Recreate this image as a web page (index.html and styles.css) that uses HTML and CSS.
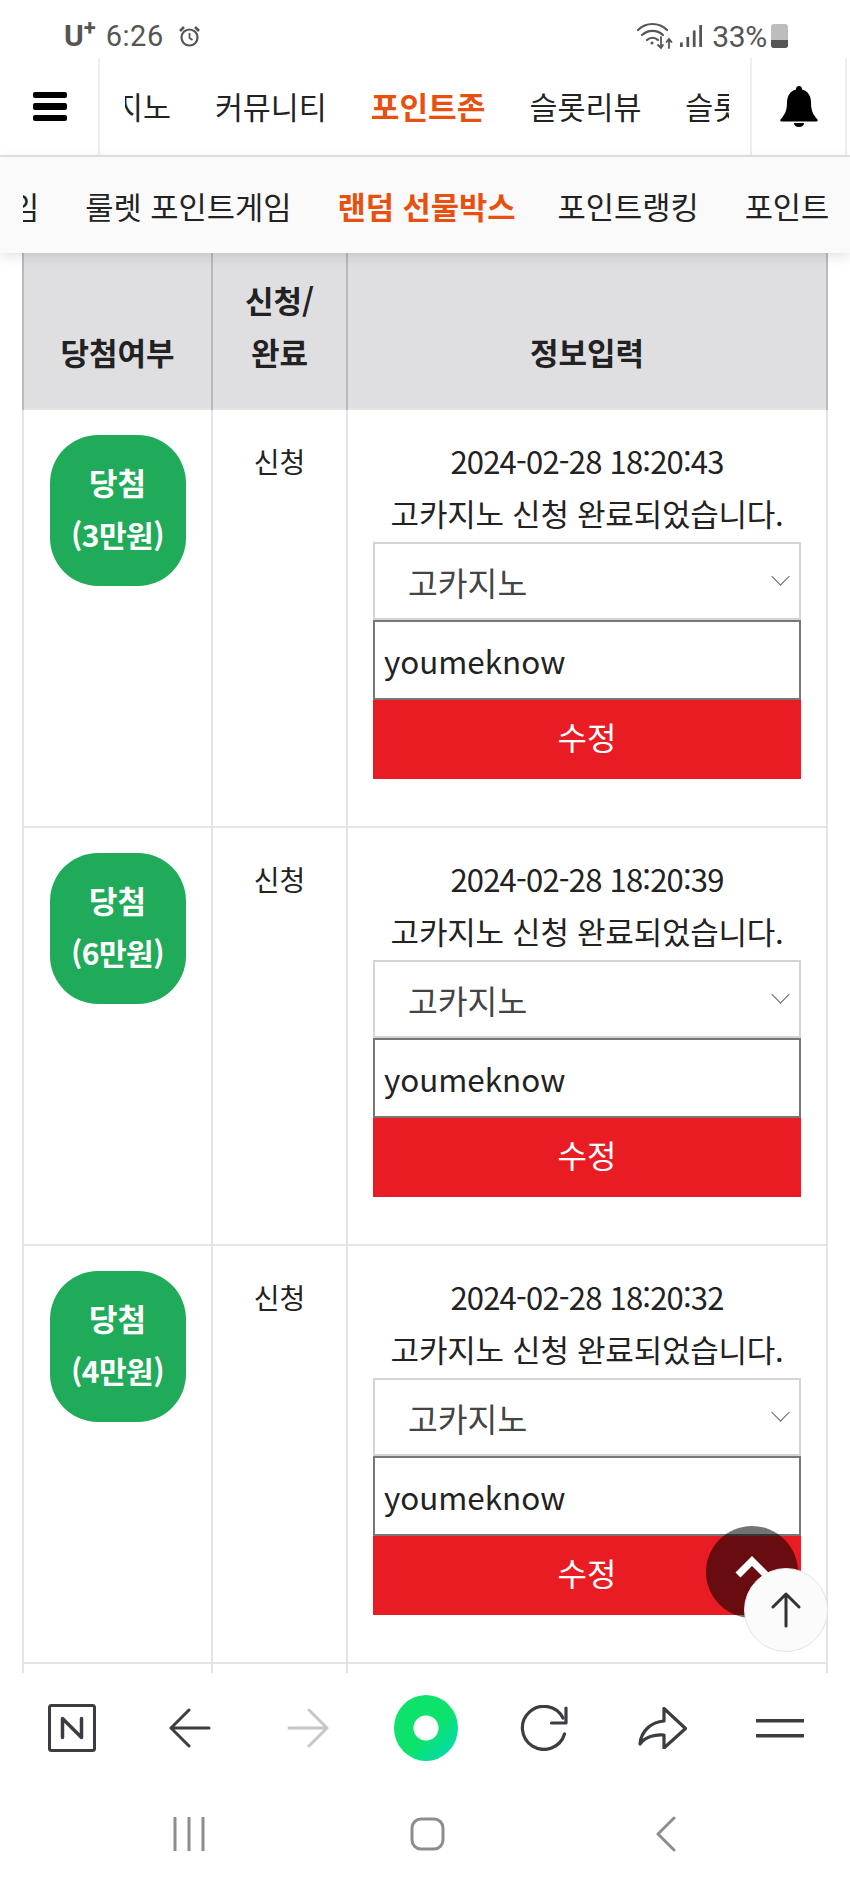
FILE: index.html
```html
<!DOCTYPE html>
<html lang="ko">
<head>
    <meta charset="UTF-8">
    <meta name="viewport" content="width=device-width, initial-scale=1.0">
    <title>랜덤 선물박스</title>
    <link rel="stylesheet" href="styles.css">
</head>
<body>
<div class="screen">
    <div class="status-bar">
        <div class="status-left">
            <span class="carrier">U<sup>+</sup></span>
            <span class="clock">6:26</span>
            <svg class="alarm" width="23" height="23" viewBox="0 0 23 23" fill="none" stroke="#555" stroke-width="2.2"><circle cx="11.5" cy="12.5" r="8"/><path d="M11.5 8v5l3 2" stroke-width="1.8"/><path d="M2 6l4-4M21 6l-4-4" stroke-width="2.6"/></svg>
        </div>
        <div class="status-right">
            <svg width="36" height="28" viewBox="0 0 36 28" fill="none" stroke="#555" stroke-width="2.2" stroke-linecap="round"><path d="M1 8c8-8 21-8 29 0"/><path d="M5 13c6-5.500 15-5.500 21 0"/><path d="M10 18c3-3 8-3 11 0"/><circle cx="15" cy="21" r="1.500" fill="#555" stroke="none"/><path d="M24 15v11M21 23l3 3 2-3M32 26V17M29.500 20l2.500-3 2.500 3" stroke-width="1.800"/></svg>
            <svg width="22" height="26" viewBox="0 0 24 26" fill="#555"><rect x="0" y="20" width="3" height="5"/><rect x="7" y="14" width="3" height="11"/><rect x="14" y="7" width="3" height="18"/><rect x="21" y="1" width="3" height="24"/></svg>
            <span class="battery-text">33%</span>
            <div class="battery"><div class="battery-fill"></div></div>
        </div>
    </div>

    <div class="top-nav">
        <div class="nav-btn menu-btn">
            <span></span><span></span><span></span>
        </div>
        <div class="top-scroll">
            <div class="top-track">
                <a>카지노</a>
                <a>커뮤니티</a>
                <a class="active">포인트존</a>
                <a>슬롯리뷰</a>
                <a>슬롯게임</a>
            </div>
        </div>
        <div class="nav-btn bell-btn">
            <svg width="38" height="41" viewBox="0 0 38 41" fill="#000"><path d="M19 0c2 0 3 1.500 3 3.500 6 1.500 9 6.500 9 13 0 8 2 12 6.500 17 .5 1 0 2-1 2H1.500c-1 0-1.500-1-1-2C5 28.500 7 24.500 7 16.500c0-6.500 3-11.500 9-13C16 1.500 17 0 19 0z"/><path d="M14 37h10c0 2.500-2 4-5 4s-5-1.500-5-4z"/></svg>
        </div>
    </div>

    <div class="sub-nav">
        <div class="sub-scroll">
            <div class="sub-track">
                <a>슬롯 포인트게임</a>
                <a>룰렛 포인트게임</a>
                <a class="active">랜덤 선물박스</a>
                <a>포인트랭킹</a>
                <a>포인트교환</a>
            </div>
        </div>
    </div>

    <div class="content">
        <table class="result-table">
            <colgroup>
                <col class="col-result">
                <col class="col-state">
                <col class="col-info">
            </colgroup>
            <thead>
                <tr>
                    <th>당첨여부</th>
                    <th>신청/<br>완료</th>
                    <th>정보입력</th>
                </tr>
            </thead>
            <tbody>
                <tr>
                    <td><div class="badge">당첨<br><span class="badge-prize">(3만원)</span></div></td>
                    <td class="state-cell">신청</td>
                    <td class="info-cell">
                        <div class="info-date">2024-02-28 18:20:43</div>
                        <div class="info-text">고카지노 신청 완료되었습니다.</div>
                        <div class="select-wrap"><select class="site-select"><option>고카지노</option></select></div>
                        <input class="id-input" type="text" value="youmeknow">
                        <button class="edit-btn">수정</button>
                    </td>
                </tr>
                <tr>
                    <td><div class="badge">당첨<br><span class="badge-prize">(6만원)</span></div></td>
                    <td class="state-cell">신청</td>
                    <td class="info-cell">
                        <div class="info-date">2024-02-28 18:20:39</div>
                        <div class="info-text">고카지노 신청 완료되었습니다.</div>
                        <div class="select-wrap"><select class="site-select"><option>고카지노</option></select></div>
                        <input class="id-input" type="text" value="youmeknow">
                        <button class="edit-btn">수정</button>
                    </td>
                </tr>
                <tr>
                    <td><div class="badge">당첨<br><span class="badge-prize">(4만원)</span></div></td>
                    <td class="state-cell">신청</td>
                    <td class="info-cell">
                        <div class="info-date">2024-02-28 18:20:32</div>
                        <div class="info-text">고카지노 신청 완료되었습니다.</div>
                        <div class="select-wrap"><select class="site-select"><option>고카지노</option></select></div>
                        <input class="id-input" type="text" value="youmeknow">
                        <button class="edit-btn">수정</button>
                    </td>
                </tr>
                <tr>
                    <td></td>
                    <td></td>
                    <td></td>
                </tr>
            </tbody>
        </table>

        <!-- floating buttons over the last row -->
        <div class="float-top">
            <svg width="34" height="24" viewBox="0 0 34 24" fill="none" stroke="#fff" stroke-width="7"><path d="M3 21L17 7l14 14"/></svg>
        </div>
        <div class="float-up">
            <svg width="30" height="36" viewBox="0 0 30 36" fill="none" stroke="#333" stroke-width="3" stroke-linecap="round" stroke-linejoin="round"><path d="M15 34V2M2 15L15 2l13 13"/></svg>
        </div>
    </div>

    <div class="toolbar">
        <div class="tool">
            <svg width="48" height="48" viewBox="0 0 48 48" fill="none" stroke="#3a3d42" stroke-width="3" stroke-linecap="round" stroke-linejoin="round"><rect x="1.500" y="1.500" width="45" height="45" rx="2"/><path d="M14.500 33.500V14.500l19 19V14.500" stroke-width="3.500"/></svg>
        </div>
        <div class="tool">
            <svg width="42" height="40" viewBox="0 0 42 40" fill="none" stroke="#3a3d42" stroke-width="3" stroke-linecap="round" stroke-linejoin="round"><path d="M40 20H2M20 2L2 20l18 18"/></svg>
        </div>
        <div class="tool">
            <svg width="42" height="40" viewBox="0 0 42 40" fill="none" stroke="#c4c6c9" stroke-width="3" stroke-linecap="round" stroke-linejoin="round"><path d="M2 20h38M22 2l18 18-18 18"/></svg>
        </div>
        <div class="tool">
            <div class="green-ring"></div>
        </div>
        <div class="tool">
            <svg width="48" height="46" viewBox="0 0 48 46" fill="none" stroke="#3a3d42" stroke-width="3.200" stroke-linecap="round" stroke-linejoin="round"><path d="M44.500 29A21.500 21.500 0 1 1 43 13"/><path d="M46 3v15H31.500"/></svg>
        </div>
        <div class="tool">
            <svg width="50" height="42" viewBox="0 0 50 42" fill="none" stroke="#3a3d42" stroke-width="3.200" stroke-linecap="round" stroke-linejoin="round"><path d="M27 1.500L48.500 21.500 27 41V28C18 27 8 30 3 37 4 24 14 15 27 14z"/></svg>
        </div>
        <div class="tool">
            <svg width="48" height="20" viewBox="0 0 48 20" fill="#3a3d42"><rect width="48" height="3.500" y="1"/><rect width="48" height="3.500" y="16"/></svg>
        </div>
    </div>

    <div class="system-nav">
        <div class="sys-key">
            <svg width="32" height="34" viewBox="0 0 32 34" fill="none" stroke="#8c8d8f" stroke-width="3"><path d="M2 0v34M16 0v34M30 0v34"/></svg>
        </div>
        <div class="sys-key">
            <svg width="35" height="34" viewBox="0 0 35 34" fill="none" stroke="#8c8d8f" stroke-width="3"><rect x="2" y="2" width="31" height="30" rx="9"/></svg>
        </div>
        <div class="sys-key">
            <svg width="21" height="36" viewBox="0 0 21 36" fill="none" stroke="#8c8d8f" stroke-width="3" stroke-linecap="round" stroke-linejoin="round"><path d="M19 2L3 18l16 16"/></svg>
        </div>
    </div>
</div>
</body>
</html>
```

FILE: styles.css
```css
* {
    box-sizing: border-box;
}
body {
    margin: 0;
    font-family: "Noto Sans CJK KR", "Noto Sans", sans-serif;
    color: #222;
    background-color: white;
}
a {
    color: #222;
    white-space: nowrap;
}
.screen {
    display: flex;
    flex-direction: column;
    width: 850px;
    height: 1889px;
    overflow: hidden;
}

/* phone status bar */
.status-bar {
    display: flex;
    justify-content: space-between;
    align-items: center;
    flex: none;
    height: 58px;
    padding: 14px 62px 0 64px;
    color: #555;
    font-family: Roboto, sans-serif;
    font-size: 29px;
}
.status-left,
.status-right {
    display: flex;
    align-items: center;
}
.carrier {
    font-weight: bold;
    font-size: 30px;
    line-height: 30px;
}
.carrier sup {
    font-size: 22px;
    line-height: 0;
}
.clock {
    margin-left: 10px;
    letter-spacing: 0.5px;
}
.alarm {
    margin-left: 14px;
}
.status-right svg {
    margin-right: 7px;
}
.battery-text {
    margin-left: 3px;
    font-size: 30px;
    letter-spacing: -0.3px;
}
.battery {
    position: relative;
    width: 17px;
    height: 24px;
    margin-left: 4px;
    border-radius: 3px;
    background-color: #bdbdbd;
}
.battery-fill {
    position: absolute;
    left: 0;
    right: 0;
    bottom: 0;
    height: 8px;
    border-radius: 0 0 3px 3px;
    background-color: #555;
}

/* main menu */
.top-nav {
    display: flex;
    flex: none;
    height: 99px;
    border-bottom: 2px solid #e4e4e4;
}
.nav-btn {
    display: flex;
    align-items: center;
    justify-content: center;
    flex: none;
}
.menu-btn {
    flex-direction: column;
    gap: 5px;
    width: 100px;
    padding-left: 1px;
    border-right: 2px solid #eee;
}
.menu-btn span {
    width: 34px;
    height: 6.500px;
    border-radius: 2px;
    background-color: black;
}
.bell-btn {
    width: 97px;
    margin-left: 21px;
    border-left: 2px solid #eee;
    border-right: 2px solid #eee;
}
.top-scroll {
    flex: none;
    width: 604px;
    margin-left: 25px;
    overflow: hidden;
}
.top-track {
    display: flex;
    align-items: center;
    gap: 44px;
    height: 95px;
    margin-left: -38px;
    font-size: 30.400px;
}
.active {
    color: #e8500f;
    font-weight: bold;
}
.top-track .active {
    font-size: 31.200px;
}

/* sub menu */
.sub-nav {
    position: relative;
    z-index: 2;
    flex: none;
    height: 96px;
    padding: 0 22px 0 23px;
    background-color: #fafafa;
    box-shadow: 0 3px 12px rgba(0, 0, 0, 0.12);
}
.sub-scroll {
    overflow: hidden;
}
.sub-track {
    display: flex;
    align-items: center;
    gap: 46px;
    height: 96px;
    margin-left: -190px;
    font-size: 30.700px;
}
.sub-track .active {
    margin-right: -4px;
}

/* result table */
.content {
    position: relative;
    flex: 1;
    overflow: hidden;
    padding-left: 22px;
}
.result-table {
    width: 804px;
    table-layout: fixed;
    border-collapse: collapse;
}
.col-result {
    width: 189px;
}
.col-state {
    width: 135px;
}
.col-info {
    width: 480px;
}
.result-table th {
    height: 155px;
    padding: 21px 0 30px;
    vertical-align: bottom;
    border-left: 2px solid #b9b9bc;
    border-right: 2px solid #b9b9bc;
    background-color: #dfdfe2;
    font-size: 31px;
    line-height: 52px;
}
.result-table td {
    height: 418px;
    padding: 25px 0 0;
    vertical-align: top;
    text-align: center;
    border: 2px solid #e3e3e8;
    line-height: 52px;
}
.badge {
    width: 136px;
    height: 151px;
    margin: 0 auto;
    padding-top: 21px;
    border-radius: 48px;
    background-color: #1fab59;
    color: white;
    font-size: 31px;
    font-weight: bold;
}
.badge-prize {
    font-size: 30px;
    letter-spacing: -0.5px;
}
.state-cell {
    font-size: 28px;
}
.result-table .info-cell {
    padding: 25px 25px 0;
}
.info-date {
    font-size: 31px;
    letter-spacing: -0.8px;
    white-space: nowrap;
}
.info-text {
    font-size: 31px;
    letter-spacing: -0.25px;
    white-space: nowrap;
}
.select-wrap {
    position: relative;
    margin-top: 3px;
}
.select-wrap::after {
    content: "";
    position: absolute;
    top: 28px;
    right: 14px;
    width: 12px;
    height: 12px;
    border-right: 1.500px solid #666;
    border-bottom: 1.500px solid #666;
    transform: rotate(45deg);
}
.site-select {
    display: block;
    width: 100%;
    height: 78px;
    padding: 0 0 0 33px;
    border: 2px solid #d4d4d4;
    border-radius: 0;
    appearance: none;
    background-color: white;
    color: #444;
    font-family: inherit;
    font-size: 32.400px;
}
.id-input {
    display: block;
    width: 100%;
    height: 80px;
    padding: 0 9px;
    border: 2px solid #777;
    border-radius: 0;
    color: #222;
    font-family: inherit;
    font-size: 31.400px;
}
.edit-btn {
    display: block;
    width: 100%;
    height: 79px;
    padding: 0 0 8px;
    border: none;
    background-color: #e91c24;
    color: white;
    font-family: inherit;
    font-size: 32px;
}
.float-top {
    position: absolute;
    left: 706px;
    top: 1273px;
    display: flex;
    align-items: center;
    justify-content: center;
    width: 92px;
    height: 92px;
    padding-bottom: 12px;
    border-radius: 50%;
    background-color: rgba(0, 0, 0, 0.55);
}
.float-up {
    position: absolute;
    left: 744px;
    top: 1315px;
    display: flex;
    align-items: center;
    justify-content: center;
    width: 84px;
    height: 84px;
    border: 1px solid #e4e4e4;
    border-radius: 50%;
    background-color: #fbfbfb;
}

/* browser toolbar */
.toolbar {
    position: relative;
    z-index: 2;
    display: grid;
    grid-template-columns: repeat(7, 118px);
    flex: none;
    height: 110px;
    padding: 0 12px 0 13px;
    background-color: white;
}
.tool,
.sys-key {
    display: flex;
    align-items: center;
    justify-content: center;
}
.green-ring {
    width: 64px;
    height: 66px;
    border-radius: 50%;
    background: radial-gradient(circle at center, white 12px, transparent 13px), linear-gradient(135deg, #0de36a 55%, #00d8c0);
}

/* android keys */
.system-nav {
    display: grid;
    grid-template-columns: repeat(3, 238px);
    flex: none;
    height: 106px;
    padding: 0 0 4px 70px;
    background-color: white;
}
```
